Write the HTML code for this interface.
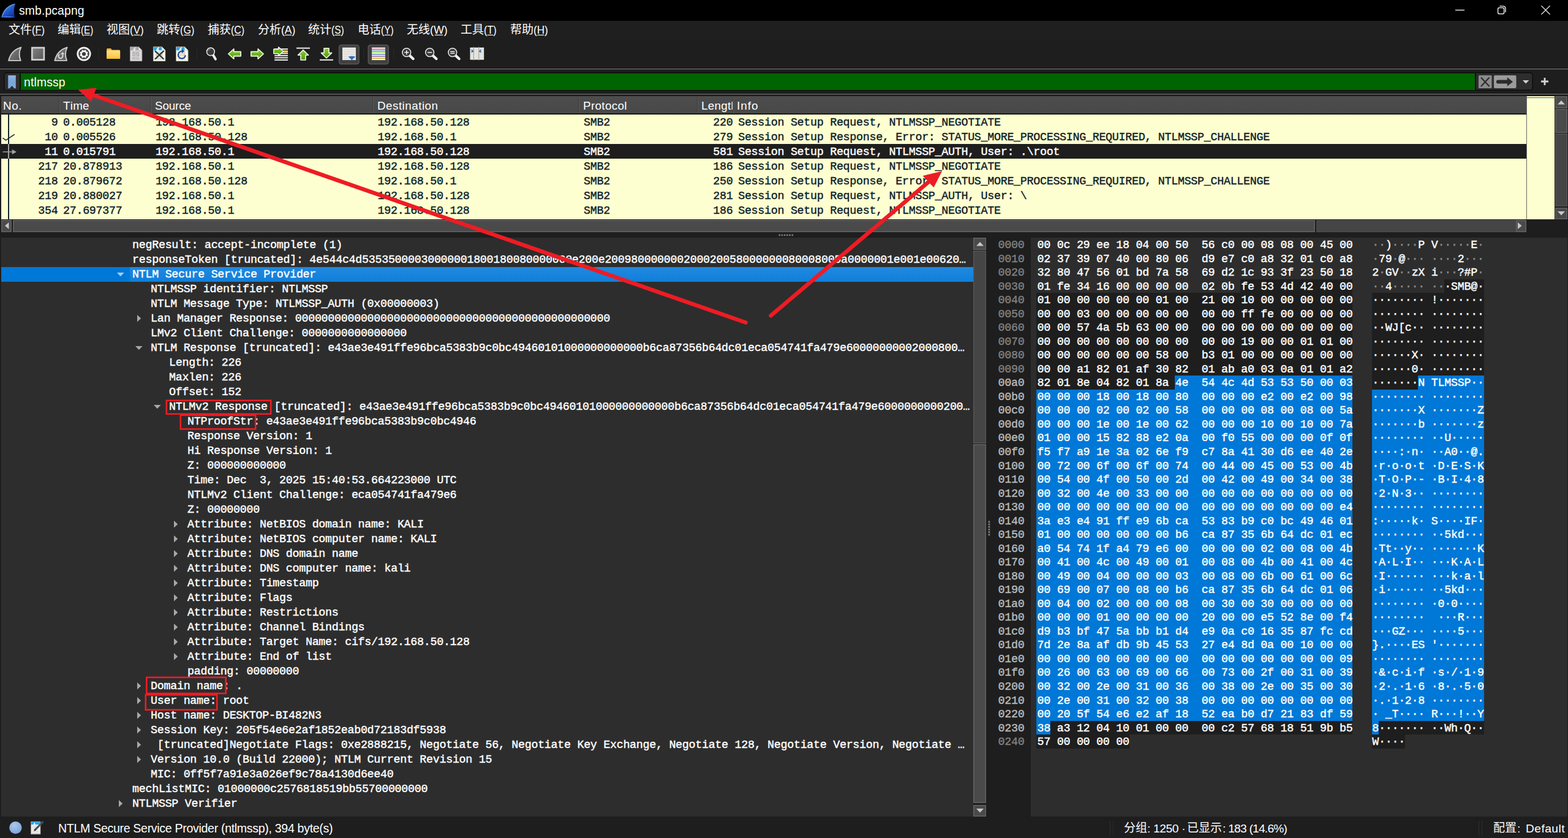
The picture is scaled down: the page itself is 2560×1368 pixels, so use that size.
<!DOCTYPE html>
<html><head><meta charset="utf-8"><title>smb.pcapng</title>
<style>
html,body{margin:0;padding:0;}
body{width:2560px;height:1368px;background:#1e1e1e;overflow:hidden;position:relative;
 font-family:"Liberation Sans",sans-serif;color:#fff;font-kerning:none;font-variant-ligatures:none;}
.a{position:absolute;}
.t{position:absolute;white-space:pre;line-height:1;}
.m{font-family:"Liberation Mono",monospace;font-size:18.33034987794955px;letter-spacing:-0.2860px;white-space:pre;-webkit-text-stroke:0.42px currentColor;}
.mh{font-family:"Liberation Mono",monospace;font-size:18.33034987794955px;letter-spacing:-0.2680px;white-space:pre;-webkit-text-stroke:0.42px currentColor;}
.u{font-family:"Liberation Sans",sans-serif;}
svg{position:absolute;overflow:visible;}
</style></head>
<body>
<div class="a" style="left:0px;top:0px;width:2560px;height:34px;background:#000;"></div>
<svg class="a" style="left:2px;top:4.5px" width="25" height="25" viewBox="0 0 25 25"><defs><linearGradient id="gsh" x1="0.1" y1="0" x2="0.9" y2="1"><stop offset="0" stop-color="#5aa0f0"/><stop offset="0.55" stop-color="#1f55c8"/><stop offset="1" stop-color="#0c2a92"/></linearGradient></defs><path d="M0.3 23.6C2.6 12.6 9.4 4 23.2 0.8C20.3 8.4 20.4 16 22.4 23.6Z" fill="url(#gsh)"/><path d="M1.2 22.6C3.6 12.8 9.8 5 21.6 1.8" stroke="#8cc0f8" stroke-width="1.1" fill="none" opacity="0.8"/><path d="M0.6 23.2C6 21.6 16 21.4 22.2 23.2Z" fill="#7fb2f2" opacity="0.75"/></svg>
<svg class="a" style="left:31px;top:24.0px" width="1" height="1"><text x="0" y="0" font-family="Liberation Sans" font-size="19.3" fill="#fff" textLength="106.50" lengthAdjust="spacing" style="white-space:pre;">smb.pcapng</text></svg>
<svg class="a" style="left:2360px;top:0" width="200" height="34" viewBox="0 0 200 34"><path d="M16 16.5h15" stroke="#fff" stroke-width="1.3" fill="none"/><rect x="85.6" y="12.6" width="10" height="10" rx="2.2" fill="none" stroke="#fff" stroke-width="1.3"/><path d="M88.3 10.2h6.2a3.5 3.5 0 0 1 3.5 3.5v6.2" fill="none" stroke="#fff" stroke-width="1.3"/><path d="M156.4 9.4l14.2 14.2M170.6 9.4l-14.2 14.2" stroke="#fff" stroke-width="1.3" fill="none"/></svg>
<div class="a" style="left:0px;top:34px;width:2560px;height:30px;background:#1f1f1f;"></div>
<svg class="a" style="left:14.2px;top:54.8px" width="1" height="1"><text x="0" y="0" font-family="'Liberation Sans','Noto Sans CJK SC',sans-serif" font-size="19" fill="#fff" textLength="38" lengthAdjust="spacing">文件</text></svg>
<svg class="a" style="left:52.20px;top:55.4px" width="1" height="1"><text x="0" y="0" font-family="Liberation Sans" font-size="19" fill="#fff" textLength="20.90" lengthAdjust="spacingAndGlyphs">(F)</text><rect x="5.64" y="1.6" width="9.61" height="1.2" fill="#fff"/></svg>
<svg class="a" style="left:94.2px;top:54.8px" width="1" height="1"><text x="0" y="0" font-family="'Liberation Sans','Noto Sans CJK SC',sans-serif" font-size="19" fill="#fff" textLength="38" lengthAdjust="spacing">编辑</text></svg>
<svg class="a" style="left:132.20px;top:55.4px" width="1" height="1"><text x="0" y="0" font-family="Liberation Sans" font-size="19" fill="#fff" textLength="20.20" lengthAdjust="spacingAndGlyphs">(E)</text><rect x="5.45" y="1.6" width="9.29" height="1.2" fill="#fff"/></svg>
<svg class="a" style="left:173.79999999999998px;top:54.8px" width="1" height="1"><text x="0" y="0" font-family="'Liberation Sans','Noto Sans CJK SC',sans-serif" font-size="19" fill="#fff" textLength="38" lengthAdjust="spacing">视图</text></svg>
<svg class="a" style="left:211.80px;top:55.4px" width="1" height="1"><text x="0" y="0" font-family="Liberation Sans" font-size="19" fill="#fff" textLength="22.60" lengthAdjust="spacingAndGlyphs">(V)</text><rect x="6.10" y="1.6" width="10.40" height="1.2" fill="#fff"/></svg>
<svg class="a" style="left:255.8px;top:54.8px" width="1" height="1"><text x="0" y="0" font-family="'Liberation Sans','Noto Sans CJK SC',sans-serif" font-size="19" fill="#fff" textLength="38" lengthAdjust="spacing">跳转</text></svg>
<svg class="a" style="left:293.80px;top:55.4px" width="1" height="1"><text x="0" y="0" font-family="Liberation Sans" font-size="19" fill="#fff" textLength="23.40" lengthAdjust="spacingAndGlyphs">(G)</text><rect x="6.32" y="1.6" width="10.76" height="1.2" fill="#fff"/></svg>
<svg class="a" style="left:339.0px;top:54.8px" width="1" height="1"><text x="0" y="0" font-family="'Liberation Sans','Noto Sans CJK SC',sans-serif" font-size="19" fill="#fff" textLength="38" lengthAdjust="spacing">捕获</text></svg>
<svg class="a" style="left:377.00px;top:55.4px" width="1" height="1"><text x="0" y="0" font-family="Liberation Sans" font-size="19" fill="#fff" textLength="22.20" lengthAdjust="spacingAndGlyphs">(C)</text><rect x="5.99" y="1.6" width="10.21" height="1.2" fill="#fff"/></svg>
<svg class="a" style="left:421.09999999999997px;top:54.8px" width="1" height="1"><text x="0" y="0" font-family="'Liberation Sans','Noto Sans CJK SC',sans-serif" font-size="19" fill="#fff" textLength="38" lengthAdjust="spacing">分析</text></svg>
<svg class="a" style="left:459.10px;top:55.4px" width="1" height="1"><text x="0" y="0" font-family="Liberation Sans" font-size="19" fill="#fff" textLength="23.30" lengthAdjust="spacingAndGlyphs">(A)</text><rect x="6.29" y="1.6" width="10.72" height="1.2" fill="#fff"/></svg>
<svg class="a" style="left:503.2px;top:54.8px" width="1" height="1"><text x="0" y="0" font-family="'Liberation Sans','Noto Sans CJK SC',sans-serif" font-size="19" fill="#fff" textLength="38" lengthAdjust="spacing">统计</text></svg>
<svg class="a" style="left:541.20px;top:55.4px" width="1" height="1"><text x="0" y="0" font-family="Liberation Sans" font-size="19" fill="#fff" textLength="20.80" lengthAdjust="spacingAndGlyphs">(S)</text><rect x="5.62" y="1.6" width="9.57" height="1.2" fill="#fff"/></svg>
<svg class="a" style="left:583.7px;top:54.8px" width="1" height="1"><text x="0" y="0" font-family="'Liberation Sans','Noto Sans CJK SC',sans-serif" font-size="19" fill="#fff" textLength="38" lengthAdjust="spacing">电话</text></svg>
<svg class="a" style="left:621.70px;top:55.4px" width="1" height="1"><text x="0" y="0" font-family="Liberation Sans" font-size="19" fill="#fff" textLength="20.80" lengthAdjust="spacingAndGlyphs">(Y)</text><rect x="5.62" y="1.6" width="9.57" height="1.2" fill="#fff"/></svg>
<svg class="a" style="left:664.4000000000001px;top:54.8px" width="1" height="1"><text x="0" y="0" font-family="'Liberation Sans','Noto Sans CJK SC',sans-serif" font-size="19" fill="#fff" textLength="38" lengthAdjust="spacing">无线</text></svg>
<svg class="a" style="left:702.40px;top:55.4px" width="1" height="1"><text x="0" y="0" font-family="Liberation Sans" font-size="19" fill="#fff" textLength="28.80" lengthAdjust="spacingAndGlyphs">(W)</text><rect x="7.78" y="1.6" width="13.25" height="1.2" fill="#fff"/></svg>
<svg class="a" style="left:752.4000000000001px;top:54.8px" width="1" height="1"><text x="0" y="0" font-family="'Liberation Sans','Noto Sans CJK SC',sans-serif" font-size="19" fill="#fff" textLength="38" lengthAdjust="spacing">工具</text></svg>
<svg class="a" style="left:790.40px;top:55.4px" width="1" height="1"><text x="0" y="0" font-family="Liberation Sans" font-size="19" fill="#fff" textLength="20.80" lengthAdjust="spacingAndGlyphs">(T)</text><rect x="5.62" y="1.6" width="9.57" height="1.2" fill="#fff"/></svg>
<svg class="a" style="left:832.7px;top:54.8px" width="1" height="1"><text x="0" y="0" font-family="'Liberation Sans','Noto Sans CJK SC',sans-serif" font-size="19" fill="#fff" textLength="38" lengthAdjust="spacing">帮助</text></svg>
<svg class="a" style="left:870.70px;top:55.4px" width="1" height="1"><text x="0" y="0" font-family="Liberation Sans" font-size="19" fill="#fff" textLength="23.70" lengthAdjust="spacingAndGlyphs">(H)</text><rect x="6.40" y="1.6" width="10.90" height="1.2" fill="#fff"/></svg>
<div class="a" style="left:0px;top:64px;width:2560px;height:47px;background:#1e1e1e;"></div>
<svg class="a" style="left:0;top:64px" width="900" height="48" viewBox="0 64 900 48"><defs>
<linearGradient id="gfin" x1="0" y1="0" x2="1" y2="1"><stop offset="0" stop-color="#838383"/><stop offset="1" stop-color="#565656"/></linearGradient>
<linearGradient id="ggrn" x1="0" y1="0" x2="0" y2="1"><stop offset="0" stop-color="#8fd134"/><stop offset="1" stop-color="#4f9a0a"/></linearGradient>
<linearGradient id="gfold" x1="0" y1="0" x2="0" y2="1"><stop offset="0" stop-color="#ffe08a"/><stop offset="1" stop-color="#fbc437"/></linearGradient>
<linearGradient id="gblue" x1="0" y1="0" x2="0" y2="1"><stop offset="0" stop-color="#5fb0ee"/><stop offset="1" stop-color="#e9f1f6"/></linearGradient>
</defs><g transform="translate(12.5,76)"><path d="M1.6 22.9C3.8 13.2 9.6 5 21.8 1.3C18.4 8.2 18.4 15.6 21.2 22.9Z" fill="url(#gfin)" stroke="#cfcfcf" stroke-width="1.9" stroke-linejoin="round"/></g><g transform="translate(51,76.6)"><rect x="1.3" y="1.3" width="19.6" height="19.6" fill="url(#gfin)" stroke="#d0d0d0" stroke-width="2.7"/></g><g transform="translate(87.8,76)"><path d="M1.6 22.9C3.8 13.2 9.6 5 21.8 1.3C18.4 8.2 18.4 15.6 21.2 22.9Z" fill="url(#gfin)" stroke="#cfcfcf" stroke-width="1.9" stroke-linejoin="round"/><path d="M14.6 11.4v4.3a3.5 3.5 0 1 1-5.6-2.8" fill="none" stroke="#d4d4d4" stroke-width="2.1"/><path d="M10.4 12.4l4.3-3.4 2.9 3.4z" fill="#d4d4d4"/></g><circle cx="137" cy="88" r="10.2" fill="#3c3c3c" stroke="#f4f4f4" stroke-width="2.8"/><path d="M141.25 89.76L143.37 90.64M138.76 92.25L139.64 94.37M135.24 92.25L134.36 94.37M132.75 89.76L130.63 90.64M132.75 86.24L130.63 85.36M135.24 83.75L134.36 81.63M138.76 83.75L139.64 81.63M141.25 86.24L143.37 85.36" stroke="#f4f4f4" stroke-width="2.5" fill="none"/><circle cx="137" cy="88" r="4.4" fill="#3c3c3c" stroke="#f4f4f4" stroke-width="2.6"/><path d="M161 80v16" stroke="#282828" stroke-width="1.2"/><g transform="translate(173.6,78.4)"><path d="M0.5 2.2a1.5 1.5 0 0 1 1.5-1.5h5.2l2.2 2.3h11.6a1.5 1.5 0 0 1 1.5 1.5v11.8a1.2 1.2 0 0 1-1.2 1.2h-19.6a1.2 1.2 0 0 1-1.2-1.2z" fill="#f5b62c"/><path d="M0.5 5.2a1.3 1.3 0 0 1 1.3-1.3h19.4a1.3 1.3 0 0 1 1.3 1.3v11.1a1.2 1.2 0 0 1-1.2 1.2h-19.6a1.2 1.2 0 0 1-1.2-1.2z" fill="url(#gfold)"/></g><g transform="translate(212,76)"><path d="M0.4 0.4h13.8l5.6 5.6v17.6h-19.4z" fill="#dadada" stroke="#9a9a9a" stroke-width="0.8"/><path d="M0.9 0.9h13.1l5.3 5.3h-18.4z" fill="#a9a9a9"/><path d="M9.4 0.9c-2.6 0.6-4 2.6-4.2 5.6h4.6c-1.4-2-1.4-4 0.6-5.6z" fill="#e3e3e3"/><path d="M14.2 0.6v5.4h5.4z" fill="#efefef" stroke="#9a9a9a" stroke-width="0.5"/><path d="M19.4 7v16.2h-18.6" stroke="#bdbdbd" stroke-width="1" fill="none"/><text x="3.9" y="11.9" font-family="Liberation Mono" font-size="4.7" font-weight="bold" fill="#9d9d9d" textLength="11.6" lengthAdjust="spacingAndGlyphs">0101</text><text x="3.9" y="16.4" font-family="Liberation Mono" font-size="4.7" font-weight="bold" fill="#9d9d9d" textLength="11.6" lengthAdjust="spacingAndGlyphs">0110</text><text x="3.9" y="20.9" font-family="Liberation Mono" font-size="4.7" font-weight="bold" fill="#9d9d9d" textLength="11.6" lengthAdjust="spacingAndGlyphs">0111</text></g><g transform="translate(250,76)"><path d="M0.4 0.4h13.8l5.6 5.6v17.6h-19.4z" fill="#fbfbef" stroke="#b9b9a6" stroke-width="0.8"/><path d="M0.9 0.9h13.1l5.3 5.3h-18.4z" fill="#2ba4ea"/><path d="M9.4 0.9c-2.6 0.6-4 2.6-4.2 5.6h4.6c-1.4-2-1.4-4 0.6-5.6z" fill="#fdfdfd"/><path d="M14.2 0.6v5.4h5.4z" fill="#ffffff" stroke="#b9b9a6" stroke-width="0.5"/><path d="M19.4 7v16.2h-18.6" stroke="#d9d9c4" stroke-width="1" fill="none"/><text x="3.9" y="11.9" font-family="Liberation Mono" font-size="4.7" font-weight="bold" fill="#b3b3a6" textLength="11.6" lengthAdjust="spacingAndGlyphs">0101</text><text x="3.9" y="16.4" font-family="Liberation Mono" font-size="4.7" font-weight="bold" fill="#b3b3a6" textLength="11.6" lengthAdjust="spacingAndGlyphs">0110</text><text x="3.9" y="20.9" font-family="Liberation Mono" font-size="4.7" font-weight="bold" fill="#b3b3a6" textLength="11.6" lengthAdjust="spacingAndGlyphs">0111</text><path d="M3.6 7.6L16.8 20M16.8 7.6L3.6 20" stroke="#2e3436" stroke-width="2.3" fill="none" stroke-linecap="round"/></g><g transform="translate(287.2,76)"><path d="M0.4 0.4h13.8l5.6 5.6v17.6h-19.4z" fill="#fbfbef" stroke="#b9b9a6" stroke-width="0.8"/><path d="M0.9 0.9h13.1l5.3 5.3h-18.4z" fill="#2ba4ea"/><path d="M9.4 0.9c-2.6 0.6-4 2.6-4.2 5.6h4.6c-1.4-2-1.4-4 0.6-5.6z" fill="#fdfdfd"/><path d="M14.2 0.6v5.4h5.4z" fill="#ffffff" stroke="#b9b9a6" stroke-width="0.5"/><path d="M19.4 7v16.2h-18.6" stroke="#d9d9c4" stroke-width="1" fill="none"/><text x="3.9" y="11.9" font-family="Liberation Mono" font-size="4.7" font-weight="bold" fill="#b3b3a6" textLength="11.6" lengthAdjust="spacingAndGlyphs">0101</text><text x="3.9" y="16.4" font-family="Liberation Mono" font-size="4.7" font-weight="bold" fill="#b3b3a6" textLength="11.6" lengthAdjust="spacingAndGlyphs">0110</text><text x="3.9" y="20.9" font-family="Liberation Mono" font-size="4.7" font-weight="bold" fill="#b3b3a6" textLength="11.6" lengthAdjust="spacingAndGlyphs">0111</text><path d="M15.6 14.2a6 6 0 1 1-5.4-6.6" stroke="#1b468f" stroke-width="2.1" fill="none"/><path d="M9.6 4.6l4.4 3-4.4 3.2z" fill="#1b468f"/></g><path d="M321.5 80v16" stroke="#282828" stroke-width="1.2"/><g transform="translate(336.5,77)"><path d="M11 12L15.4 19.6" stroke="#f0f0f0" stroke-width="4" stroke-linecap="round" fill="none"/><circle cx="7.4" cy="7.4" r="6.4" fill="#3b3b3b" stroke="#ededed" stroke-width="1.5"/><path d="M3.2 6.2a4.6 4.6 0 0 1 4.2-3" stroke="#9a9a9a" stroke-width="1" fill="none"/></g><path transform="translate(372,79)" d="M0.8 9L9.8 0.8V5.4H21.2V12.6H9.8V17.2Z" fill="url(#ggrn)" stroke="#f3f9ea" stroke-width="1.6" stroke-linejoin="round"/><path transform="translate(431,79) scale(-1,1)" d="M0.8 9L9.8 0.8V5.4H21.2V12.6H9.8V17.2Z" fill="url(#ggrn)" stroke="#f3f9ea" stroke-width="1.6" stroke-linejoin="round"/><g transform="translate(446,76)"><rect x="2.2" y="3.20" width="21.8" height="1.9" fill="#f6f6f6"/><rect x="2.2" y="6.75" width="21.8" height="1.9" fill="#f6f6f6"/><rect x="2.2" y="10.30" width="21.8" height="1.9" fill="#f6f6f6"/><rect x="2.2" y="13.85" width="21.8" height="1.9" fill="#f6f6f6"/><rect x="2.2" y="17.40" width="21.8" height="1.9" fill="#f6f6f6"/><rect x="2.2" y="20.95" width="21.8" height="1.9" fill="#f6f6f6"/><rect x="17" y="6.4" width="7" height="3.2" fill="#f7dc3c"/><path d="M0.9 4.2H8.6V0.9L16.8 7.9L8.6 14.9V11.6H0.9Z" fill="url(#ggrn)" stroke="#f3f9ea" stroke-width="1.5" stroke-linejoin="round"/></g><g transform="translate(484,77.4)"><path d="M0 1.2h22" stroke="#ededed" stroke-width="2" fill="none"/><path d="M11 4.2L19.6 12.6H15V20.6H7V12.6H2.4Z" fill="url(#ggrn)" stroke="#f3f9ea" stroke-width="1.6" stroke-linejoin="round"/></g><g transform="translate(522,78)"><path d="M0 19.8h22" stroke="#ededed" stroke-width="2" fill="none"/><path d="M11 16.8L19.6 8.4H15V0.8H7V8.4H2.4Z" fill="url(#ggrn)" stroke="#f3f9ea" stroke-width="1.6" stroke-linejoin="round"/></g><rect x="553.6" y="73.6" width="32.4" height="31" rx="3.5" fill="#404040" stroke="#585858" stroke-width="1.5"/><g transform="translate(559,77.6)"><rect x="0" y="0" width="22" height="20.5" fill="#c9c9c9"/><rect x="0" y="0.30" width="22" height="2.1" fill="#f0efe9"/><rect x="0" y="3.25" width="22" height="2.1" fill="#f0efe9"/><rect x="0" y="6.20" width="22" height="2.1" fill="#f0efe9"/><rect x="0" y="9.15" width="22" height="2.1" fill="#f0efe9"/><rect x="0" y="12.10" width="22" height="2.1" fill="#f0efe9"/><rect x="0" y="15.05" width="22" height="2.1" fill="#f0efe9"/><rect x="0" y="18.00" width="22" height="2.1" fill="#f0efe9"/><path d="M10.2 15h10.4l-5.2 5.6z" fill="#2f6fc4"/><ellipse cx="15.4" cy="15.4" rx="5.2" ry="1.6" fill="#2f6fc4"/></g><path d="M594 80v16" stroke="#282828" stroke-width="1.2"/><rect x="601.2" y="73.6" width="33" height="31" rx="3.5" fill="#404040" stroke="#585858" stroke-width="1.5"/><g transform="translate(607,77.6)"><rect x="0" y="0" width="22" height="20.5" fill="#fcfcfc"/><rect x="0" y="2.20" width="22" height="1.15" fill="#e01b24"/><rect x="0" y="5.20" width="22" height="1.15" fill="#3465a4"/><rect x="0" y="8.20" width="22" height="1.15" fill="#73d216"/><rect x="0" y="11.20" width="22" height="1.15" fill="#3465a4"/><rect x="0" y="14.20" width="22" height="1.15" fill="#75507b"/><rect x="0" y="17.20" width="22" height="1.15" fill="#c4a000"/></g><path d="M642.5 80v16" stroke="#282828" stroke-width="1.2"/><g transform="translate(656,77.8)"><path d="M12.8 12.8L18.6 18.2" stroke="#f0f0f0" stroke-width="4.3" stroke-linecap="round" fill="none"/><circle cx="7.8" cy="7.8" r="6.9" fill="#3b3b3b" stroke="#ededed" stroke-width="1.5"/><path d="M4.2 7.8h7.2M7.8 4.2v7.2" stroke="#f2f2f2" stroke-width="1.5" fill="none"/></g><g transform="translate(693.8,77.8)"><path d="M12.8 12.8L18.6 18.2" stroke="#f0f0f0" stroke-width="4.3" stroke-linecap="round" fill="none"/><circle cx="7.8" cy="7.8" r="6.9" fill="#3b3b3b" stroke="#ededed" stroke-width="1.5"/><path d="M4.2 7.8h7.2" stroke="#f2f2f2" stroke-width="1.5" fill="none"/></g><g transform="translate(731,77.8)"><path d="M12.8 12.8L18.6 18.2" stroke="#f0f0f0" stroke-width="4.3" stroke-linecap="round" fill="none"/><circle cx="7.8" cy="7.8" r="6.9" fill="#3b3b3b" stroke="#ededed" stroke-width="1.5"/><path d="M4.2 6.4h7.2M4.2 9.3h7.2" stroke="#f2f2f2" stroke-width="1.5" fill="none"/></g><g transform="translate(767.6,77)"><rect x="0" y="0.6" width="22.5" height="20" fill="#c5c5bd"/><rect x="0" y="0.90" width="22.5" height="2.0" fill="#f1f0ea"/><rect x="0" y="3.75" width="22.5" height="2.0" fill="#f1f0ea"/><rect x="0" y="6.60" width="22.5" height="2.0" fill="#f1f0ea"/><rect x="0" y="9.45" width="22.5" height="2.0" fill="#f1f0ea"/><rect x="0" y="12.30" width="22.5" height="2.0" fill="#f1f0ea"/><rect x="0" y="15.15" width="22.5" height="2.0" fill="#f1f0ea"/><rect x="0" y="18.00" width="22.5" height="2.0" fill="#f1f0ea"/><path d="M5.8 -0.6v22.2M14.2 -0.6v22.2" stroke="#9a9a9a" stroke-width="1" fill="none"/><path d="M2.2 3.4l4 3-4 3z" fill="#3a6fb8"/><path d="M17.8 3.4l-4 3 4 3z" fill="#3a6fb8"/></g></svg>
<div class="a" style="left:0px;top:111px;width:2560px;height:1px;background:#141414;"></div>
<div class="a" style="left:0px;top:112px;width:2560px;height:1px;background:#7a7a7a;"></div>
<div class="a" style="left:0px;top:113px;width:2560px;height:1px;background:#2a2a2a;"></div>
<div class="a" style="left:6px;top:118px;width:2497px;height:30px;background:#2d2d2d;border-radius:5px;box-shadow:0 0 0 1.5px #0c0c0c inset;"></div>
<div class="a" style="left:8px;top:120px;width:24px;height:27px;background:#2d2d2d;border-radius:3px 0 0 3px;"></div>
<div class="a" style="left:32px;top:120px;width:2px;height:27px;background:#101010;"></div>
<div class="a" style="left:34px;top:120px;width:2374px;height:27px;background:#006400;"></div>
<div class="a" style="left:2408px;top:120px;width:2px;height:27px;background:#101010;"></div>
<svg class="a" style="left:13px;top:123px" width="14" height="22" viewBox="0 0 14 22"><defs><linearGradient id="gbm" x1="0" y1="0" x2="0" y2="1"><stop offset="0" stop-color="#8fb6e4"/><stop offset="0.5" stop-color="#7aa5d6"/><stop offset="1" stop-color="#7eaadc"/></linearGradient></defs><path d="M0.2 0h12.6v21.2h-2.4l-3.9-4.2-3.9 4.2h-2.4z" fill="url(#gbm)"/></svg>
<svg class="a" style="left:39px;top:140.6px" width="1" height="1"><text x="0" y="0" font-family="Liberation Sans" font-size="19.3" fill="#fff" textLength="67.50" lengthAdjust="spacing" style="white-space:pre;">ntlmssp</text></svg>
<svg class="a" style="left:2414px;top:123px" width="22" height="21" viewBox="0 0 22 21"><rect x="0" y="0" width="21.5" height="21" rx="1.5" fill="#8c8c8c"/><path d="M4 3.5L17.5 18M17.5 3.5L4 18" stroke="#2b2b2b" stroke-width="2.1" fill="none"/></svg>
<svg class="a" style="left:2439px;top:123px" width="37" height="21" viewBox="0 0 37 21"><rect x="0" y="0" width="36.5" height="21" rx="2" fill="#9b9b9b"/><path d="M6.8 7.6h15v-4.4l9.2 7.3-9.2 7.3v-4.4h-15a2.9 2.9 0 0 1 0-5.8z" fill="#2b2b2b"/></svg>
<svg class="a" style="left:2486px;top:130.5px" width="11" height="6" viewBox="0 0 11 6"><path d="M0 0h10.4l-5.2 5.6z" fill="#d0d0d0"/></svg>
<svg class="a" style="left:2516px;top:127px" width="12" height="12" viewBox="0 0 12 12"><path d="M4.6 0h2.8v4.6h4.6v2.8h-4.6v4.6h-2.8v-4.6h-4.6v-2.8h4.6z" fill="#d4d4d4"/></svg>
<div class="a" style="left:0px;top:152px;width:2560px;height:1px;background:#141414;"></div>
<div class="a" style="left:0px;top:153px;width:2560px;height:1px;background:#7a7a7a;"></div>
<div class="a" style="left:0px;top:154px;width:2560px;height:1px;background:#2a2a2a;"></div>
<div class="a" style="left:2px;top:157px;width:2490px;height:29px;background:#4a4a4a;background:linear-gradient(#4d4d4d,#484848);"></div>
<div class="a" style="left:2px;top:185px;width:2490px;height:1.5px;background:#1a1a1a;"></div>
<svg class="a" style="left:5px;top:178.5px" width="1" height="1"><text x="0" y="0" font-family="Liberation Sans" font-size="18.8" fill="#fff" textLength="30.50" lengthAdjust="spacing" style="white-space:pre;">No.</text></svg>
<div class="a" style="left:96px;top:158px;width:1px;height:27px;background:#3a3a3a;"></div>
<div class="a" style="left:97px;top:158px;width:1px;height:27px;background:#5c5c5c;"></div>
<svg class="a" style="left:102.5px;top:178.5px" width="1" height="1"><text x="0" y="0" font-family="Liberation Sans" font-size="18.8" fill="#fff" textLength="42.50" lengthAdjust="spacing" style="white-space:pre;">Time</text></svg>
<div class="a" style="left:245px;top:158px;width:1px;height:27px;background:#3a3a3a;"></div>
<div class="a" style="left:246px;top:158px;width:1px;height:27px;background:#5c5c5c;"></div>
<svg class="a" style="left:252.5px;top:178.5px" width="1" height="1"><text x="0" y="0" font-family="Liberation Sans" font-size="18.8" fill="#fff" textLength="59.00" lengthAdjust="spacing" style="white-space:pre;">Source</text></svg>
<div class="a" style="left:608px;top:158px;width:1px;height:27px;background:#3a3a3a;"></div>
<div class="a" style="left:609px;top:158px;width:1px;height:27px;background:#5c5c5c;"></div>
<svg class="a" style="left:615.5px;top:178.5px" width="1" height="1"><text x="0" y="0" font-family="Liberation Sans" font-size="18.8" fill="#fff" textLength="99.00" lengthAdjust="spacing" style="white-space:pre;">Destination</text></svg>
<div class="a" style="left:944px;top:158px;width:1px;height:27px;background:#3a3a3a;"></div>
<div class="a" style="left:945px;top:158px;width:1px;height:27px;background:#5c5c5c;"></div>
<svg class="a" style="left:951.5px;top:178.5px" width="1" height="1"><text x="0" y="0" font-family="Liberation Sans" font-size="18.8" fill="#fff" textLength="71.50" lengthAdjust="spacing" style="white-space:pre;">Protocol</text></svg>
<div class="a" style="left:1138px;top:158px;width:1px;height:27px;background:#3a3a3a;"></div>
<div class="a" style="left:1139px;top:158px;width:1px;height:27px;background:#5c5c5c;"></div>
<div class="a" style="left:1145px;top:158px;width:51px;height:27px;overflow:hidden"><svg class="a" style="left:0;top:20.5px" width="1" height="1"><text x="0" y="0" font-family="Liberation Sans" font-size="18.8" fill="#fff" textLength="59" lengthAdjust="spacing">Length</text></svg></div>
<div class="a" style="left:1196px;top:158px;width:1px;height:27px;background:#3a3a3a;"></div>
<div class="a" style="left:1197px;top:158px;width:1px;height:27px;background:#5c5c5c;"></div>
<svg class="a" style="left:1203px;top:178.5px" width="1" height="1"><text x="0" y="0" font-family="Liberation Sans" font-size="18.8" fill="#fff" textLength="34.50" lengthAdjust="spacing" style="white-space:pre;">Info</text></svg>
<div class="a" style="left:2px;top:186.5px;width:2490px;height:171.5px;background:#feffd0;"></div>
<div class="t m" style="left:83.79px;top:191.76px;color:#0f2229">9</div>
<div class="t m" style="left:103.00px;top:191.76px;color:#0f2229">0.005128</div>
<div class="t m" style="left:253.90px;top:191.76px;color:#0f2229">192.168.50.1</div>
<div class="t m" style="left:616.60px;top:191.76px;color:#0f2229">192.168.50.128</div>
<div class="t m" style="left:953.10px;top:191.76px;color:#0f2229">SMB2</div>
<div class="t m" style="left:1164.26px;top:191.76px;color:#0f2229">220</div>
<div class="t m" style="left:1205.20px;top:191.76px;color:#0f2229">Session Setup Request, NTLMSSP_NEGOTIATE</div>
<div class="t m" style="left:73.07px;top:215.76px;color:#0f2229">10</div>
<div class="t m" style="left:103.00px;top:215.76px;color:#0f2229">0.005526</div>
<div class="t m" style="left:253.90px;top:215.76px;color:#0f2229">192.168.50.128</div>
<div class="t m" style="left:616.60px;top:215.76px;color:#0f2229">192.168.50.1</div>
<div class="t m" style="left:953.10px;top:215.76px;color:#0f2229">SMB2</div>
<div class="t m" style="left:1164.26px;top:215.76px;color:#0f2229">279</div>
<div class="t m" style="left:1205.20px;top:215.76px;color:#0f2229">Session Setup Response, Error: STATUS_MORE_PROCESSING_REQUIRED, NTLMSSP_CHALLENGE</div>
<div class="a" style="left:2px;top:234.5px;width:2490px;height:24px;background:#1e1e1e;"></div>
<div class="t m" style="left:73.07px;top:239.76px;color:#fff">11</div>
<div class="t m" style="left:103.00px;top:239.76px;color:#fff">0.015791</div>
<div class="t m" style="left:253.90px;top:239.76px;color:#fff">192.168.50.1</div>
<div class="t m" style="left:616.60px;top:239.76px;color:#fff">192.168.50.128</div>
<div class="t m" style="left:953.10px;top:239.76px;color:#fff">SMB2</div>
<div class="t m" style="left:1164.26px;top:239.76px;color:#fff">581</div>
<div class="t m" style="left:1205.20px;top:239.76px;color:#fff">Session Setup Request, NTLMSSP_AUTH, User: .\root</div>
<div class="t m" style="left:62.36px;top:263.76px;color:#0f2229">217</div>
<div class="t m" style="left:103.00px;top:263.76px;color:#0f2229">20.878913</div>
<div class="t m" style="left:253.90px;top:263.76px;color:#0f2229">192.168.50.1</div>
<div class="t m" style="left:616.60px;top:263.76px;color:#0f2229">192.168.50.128</div>
<div class="t m" style="left:953.10px;top:263.76px;color:#0f2229">SMB2</div>
<div class="t m" style="left:1164.26px;top:263.76px;color:#0f2229">186</div>
<div class="t m" style="left:1205.20px;top:263.76px;color:#0f2229">Session Setup Request, NTLMSSP_NEGOTIATE</div>
<div class="t m" style="left:62.36px;top:287.76px;color:#0f2229">218</div>
<div class="t m" style="left:103.00px;top:287.76px;color:#0f2229">20.879672</div>
<div class="t m" style="left:253.90px;top:287.76px;color:#0f2229">192.168.50.128</div>
<div class="t m" style="left:616.60px;top:287.76px;color:#0f2229">192.168.50.1</div>
<div class="t m" style="left:953.10px;top:287.76px;color:#0f2229">SMB2</div>
<div class="t m" style="left:1164.26px;top:287.76px;color:#0f2229">250</div>
<div class="t m" style="left:1205.20px;top:287.76px;color:#0f2229">Session Setup Response, Error: STATUS_MORE_PROCESSING_REQUIRED, NTLMSSP_CHALLENGE</div>
<div class="t m" style="left:62.36px;top:311.76px;color:#0f2229">219</div>
<div class="t m" style="left:103.00px;top:311.76px;color:#0f2229">20.880027</div>
<div class="t m" style="left:253.90px;top:311.76px;color:#0f2229">192.168.50.1</div>
<div class="t m" style="left:616.60px;top:311.76px;color:#0f2229">192.168.50.128</div>
<div class="t m" style="left:953.10px;top:311.76px;color:#0f2229">SMB2</div>
<div class="t m" style="left:1164.26px;top:311.76px;color:#0f2229">281</div>
<div class="t m" style="left:1205.20px;top:311.76px;color:#0f2229">Session Setup Request, NTLMSSP_AUTH, User: \</div>
<div class="t m" style="left:62.36px;top:335.76px;color:#0f2229">354</div>
<div class="t m" style="left:103.00px;top:335.76px;color:#0f2229">27.697377</div>
<div class="t m" style="left:253.90px;top:335.76px;color:#0f2229">192.168.50.1</div>
<div class="t m" style="left:616.60px;top:335.76px;color:#0f2229">192.168.50.128</div>
<div class="t m" style="left:953.10px;top:335.76px;color:#0f2229">SMB2</div>
<div class="t m" style="left:1164.26px;top:335.76px;color:#0f2229">186</div>
<div class="t m" style="left:1205.20px;top:335.76px;color:#0f2229">Session Setup Request, NTLMSSP_NEGOTIATE</div>
<div class="a" style="left:13.2px;top:186.5px;width:1.7px;height:48px;background:#12272e;"></div>
<div class="a" style="left:13.2px;top:258.5px;width:1.7px;height:99.5px;background:#12272e;"></div>
<div class="a" style="left:13.2px;top:234.5px;width:1.7px;height:24px;background:#a0a0a0;"></div>
<svg class="a" style="left:2px;top:210.5px" width="30" height="48" viewBox="0 0 30 48"><path d="M2.4 14.4L7.6 17.9L21.7 8.3" stroke="#12272e" stroke-width="1.5" fill="none"/><path d="M2.5 36.9h16" stroke="#a0a0a0" stroke-width="1.5" fill="none"/><path d="M17.6 32.8l7.4 4.1-7.4 4.1z" fill="#a0a0a0"/></svg>
<div class="a" style="left:2492px;top:157px;width:1px;height:201px;background:#6a6a6a;"></div>
<div class="a" style="left:2493px;top:157px;width:45px;height:201px;background:#feffd0;"></div>
<div class="a" style="left:2493px;top:159px;width:45px;height:1.4px;background:#0078d7;"></div>
<div class="a" style="left:2538.5px;top:157px;width:20.5px;height:201px;background:#1c1c1c;"></div>
<div class="a" style="left:2538.5px;top:157px;width:20.5px;height:19.5px;background:#4a4a4a;box-shadow:0 0 0 1.5px #626262 inset;"></div>
<div class="a" style="left:2538.5px;top:177.5px;width:20.5px;height:39px;background:#4a4a4a;box-shadow:0 0 0 1.5px #626262 inset;"></div>
<div class="a" style="left:2538.5px;top:218.0px;width:20.5px;height:119.0px;background:#454545;box-shadow:0 0 0 1.5px #545454 inset;"></div>
<div class="a" style="left:2538.5px;top:338.5px;width:20.5px;height:19.5px;background:#4a4a4a;box-shadow:0 0 0 1.5px #626262 inset;"></div>
<svg class="a" style="left:2542.75px;top:163.5px" width="12" height="7" viewBox="0 0 12 7"><path d="M0 6.5l6-6.5 6 6.5z" fill="#c8c8c8"/></svg>
<svg class="a" style="left:2542.75px;top:345.0px" width="12" height="7" viewBox="0 0 12 7"><path d="M0 0h12l-6 6.5z" fill="#c8c8c8"/></svg>
<div class="a" style="left:2px;top:359px;width:2490px;height:19.8px;background:#454545;box-shadow:0 1px 0 #505050 inset,0 -1px 0 #505050 inset;"></div>
<div class="a" style="left:2px;top:359px;width:17px;height:19.8px;background:#4a4a4a;box-shadow:0 0 0 1.5px #626262 inset;"></div>
<div class="a" style="left:2475px;top:359px;width:17px;height:19.8px;background:#4a4a4a;box-shadow:0 0 0 1.5px #626262 inset;"></div>
<svg class="a" style="left:7.5px;top:363.4px" width="7" height="11" viewBox="0 0 7 11"><path d="M6.5 0v11l-6.5-5.5z" fill="#c8c8c8"/></svg>
<svg class="a" style="left:2477.8px;top:363.4px" width="7" height="11" viewBox="0 0 7 11"><path d="M0 0l6.5 5.5-6.5 5.5z" fill="#c8c8c8"/></svg>
<div class="a" style="left:19px;top:359px;width:2130px;height:19.8px;background:#1c1c1c;"></div>
<div class="a" style="left:21px;top:359px;width:2126px;height:19.8px;background:#4a4a4a;box-shadow:0 0 0 1.5px #626262 inset;"></div>
<div class="a" style="left:2px;top:388px;width:1587px;height:945px;background:#2d2d2d;"></div>
<div class="t m" style="left:216.10px;top:392.16px;color:#fff">negResult: accept-incomplete (1)</div>
<div class="t m" style="left:216.10px;top:416.16px;color:#fff">responseToken [truncated]: 4e544c4d53535000030000001800180080000000e200e200980000000200020058000000080008005a0000001e001e00620…</div>
<div class="a" style="left:2px;top:436px;width:1587px;height:24px;background:#0078d7;"></div>
<div class="a" style="left:211.9px;top:436px;width:1377.1px;height:24px;background:#1a86de;background:linear-gradient(#2189df,#0f7fda);"></div>
<div class="t m" style="left:216.10px;top:440.16px;color:#fff">NTLM Secure Service Provider</div>
<svg class="a" style="left:190.9px;top:445.4px" width="12" height="7" viewBox="0 0 12 7"><path d="M0 0h11.6l-5.8 6.2z" fill="#a9cdf0"/></svg>
<div class="t m" style="left:246.10px;top:464.16px;color:#fff">NTLMSSP identifier: NTLMSSP</div>
<div class="t m" style="left:246.10px;top:488.16px;color:#fff">NTLM Message Type: NTLMSSP_AUTH (0x00000003)</div>
<div class="t m" style="left:246.10px;top:512.16px;color:#fff">Lan Manager Response: 000000000000000000000000000000000000000000000000</div>
<svg class="a" style="left:223.9px;top:514.4px" width="7" height="12" viewBox="0 0 7 12"><path d="M0 0l6.2 5.8-6.2 5.8z" fill="#a8a8a8"/></svg>
<div class="t m" style="left:246.10px;top:536.16px;color:#fff">LMv2 Client Challenge: 0000000000000000</div>
<div class="t m" style="left:246.10px;top:560.16px;color:#fff">NTLM Response [truncated]: e43ae3e491ffe96bca5383b9c0bc49460101000000000000b6ca87356b64dc01eca054741fa479e60000000002000800…</div>
<svg class="a" style="left:220.9px;top:565.4px" width="12" height="7" viewBox="0 0 12 7"><path d="M0 0h11.6l-5.8 6.2z" fill="#a8a8a8"/></svg>
<div class="t m" style="left:276.10px;top:584.16px;color:#fff">Length: 226</div>
<div class="t m" style="left:276.10px;top:608.16px;color:#fff">Maxlen: 226</div>
<div class="t m" style="left:276.10px;top:632.16px;color:#fff">Offset: 152</div>
<div class="t m" style="left:276.10px;top:656.16px;color:#fff">NTLMv2 Response [truncated]: e43ae3e491ffe96bca5383b9c0bc49460101000000000000b6ca87356b64dc01eca054741fa479e6000000000200…</div>
<svg class="a" style="left:250.9px;top:661.4px" width="12" height="7" viewBox="0 0 12 7"><path d="M0 0h11.6l-5.8 6.2z" fill="#a8a8a8"/></svg>
<div class="t m" style="left:306.10px;top:680.16px;color:#fff">NTProofStr: e43ae3e491ffe96bca5383b9c0bc4946</div>
<div class="t m" style="left:306.10px;top:704.16px;color:#fff">Response Version: 1</div>
<div class="t m" style="left:306.10px;top:728.16px;color:#fff">Hi Response Version: 1</div>
<div class="t m" style="left:306.10px;top:752.16px;color:#fff">Z: 000000000000</div>
<div class="t m" style="left:306.10px;top:776.16px;color:#fff">Time: Dec  3, 2025 15:40:53.664223000 UTC</div>
<div class="t m" style="left:306.10px;top:800.16px;color:#fff">NTLMv2 Client Challenge: eca054741fa479e6</div>
<div class="t m" style="left:306.10px;top:824.16px;color:#fff">Z: 00000000</div>
<div class="t m" style="left:306.10px;top:848.16px;color:#fff">Attribute: NetBIOS domain name: KALI</div>
<svg class="a" style="left:283.9px;top:850.4px" width="7" height="12" viewBox="0 0 7 12"><path d="M0 0l6.2 5.8-6.2 5.8z" fill="#a8a8a8"/></svg>
<div class="t m" style="left:306.10px;top:872.16px;color:#fff">Attribute: NetBIOS computer name: KALI</div>
<svg class="a" style="left:283.9px;top:874.4px" width="7" height="12" viewBox="0 0 7 12"><path d="M0 0l6.2 5.8-6.2 5.8z" fill="#a8a8a8"/></svg>
<div class="t m" style="left:306.10px;top:896.16px;color:#fff">Attribute: DNS domain name</div>
<svg class="a" style="left:283.9px;top:898.4px" width="7" height="12" viewBox="0 0 7 12"><path d="M0 0l6.2 5.8-6.2 5.8z" fill="#a8a8a8"/></svg>
<div class="t m" style="left:306.10px;top:920.16px;color:#fff">Attribute: DNS computer name: kali</div>
<svg class="a" style="left:283.9px;top:922.4px" width="7" height="12" viewBox="0 0 7 12"><path d="M0 0l6.2 5.8-6.2 5.8z" fill="#a8a8a8"/></svg>
<div class="t m" style="left:306.10px;top:944.16px;color:#fff">Attribute: Timestamp</div>
<svg class="a" style="left:283.9px;top:946.4px" width="7" height="12" viewBox="0 0 7 12"><path d="M0 0l6.2 5.8-6.2 5.8z" fill="#a8a8a8"/></svg>
<div class="t m" style="left:306.10px;top:968.16px;color:#fff">Attribute: Flags</div>
<svg class="a" style="left:283.9px;top:970.4px" width="7" height="12" viewBox="0 0 7 12"><path d="M0 0l6.2 5.8-6.2 5.8z" fill="#a8a8a8"/></svg>
<div class="t m" style="left:306.10px;top:992.16px;color:#fff">Attribute: Restrictions</div>
<svg class="a" style="left:283.9px;top:994.4px" width="7" height="12" viewBox="0 0 7 12"><path d="M0 0l6.2 5.8-6.2 5.8z" fill="#a8a8a8"/></svg>
<div class="t m" style="left:306.10px;top:1016.16px;color:#fff">Attribute: Channel Bindings</div>
<svg class="a" style="left:283.9px;top:1018.4px" width="7" height="12" viewBox="0 0 7 12"><path d="M0 0l6.2 5.8-6.2 5.8z" fill="#a8a8a8"/></svg>
<div class="t m" style="left:306.10px;top:1040.16px;color:#fff">Attribute: Target Name: cifs/192.168.50.128</div>
<svg class="a" style="left:283.9px;top:1042.4px" width="7" height="12" viewBox="0 0 7 12"><path d="M0 0l6.2 5.8-6.2 5.8z" fill="#a8a8a8"/></svg>
<div class="t m" style="left:306.10px;top:1064.16px;color:#fff">Attribute: End of list</div>
<svg class="a" style="left:283.9px;top:1066.4px" width="7" height="12" viewBox="0 0 7 12"><path d="M0 0l6.2 5.8-6.2 5.8z" fill="#a8a8a8"/></svg>
<div class="t m" style="left:306.10px;top:1088.16px;color:#fff">padding: 00000000</div>
<div class="t m" style="left:246.10px;top:1112.16px;color:#fff">Domain name: .</div>
<svg class="a" style="left:223.9px;top:1114.4px" width="7" height="12" viewBox="0 0 7 12"><path d="M0 0l6.2 5.8-6.2 5.8z" fill="#a8a8a8"/></svg>
<div class="t m" style="left:246.10px;top:1136.16px;color:#fff">User name: root</div>
<svg class="a" style="left:223.9px;top:1138.4px" width="7" height="12" viewBox="0 0 7 12"><path d="M0 0l6.2 5.8-6.2 5.8z" fill="#a8a8a8"/></svg>
<div class="t m" style="left:246.10px;top:1160.16px;color:#fff">Host name: DESKTOP-BI482N3</div>
<svg class="a" style="left:223.9px;top:1162.4px" width="7" height="12" viewBox="0 0 7 12"><path d="M0 0l6.2 5.8-6.2 5.8z" fill="#a8a8a8"/></svg>
<div class="t m" style="left:246.10px;top:1184.16px;color:#fff">Session Key: 205f54e6e2af1852eab0d72183df5938</div>
<svg class="a" style="left:223.9px;top:1186.4px" width="7" height="12" viewBox="0 0 7 12"><path d="M0 0l6.2 5.8-6.2 5.8z" fill="#a8a8a8"/></svg>
<div class="t m" style="left:246.10px;top:1208.16px;color:#fff"> [truncated]Negotiate Flags: 0xe2888215, Negotiate 56, Negotiate Key Exchange, Negotiate 128, Negotiate Version, Negotiate …</div>
<svg class="a" style="left:223.9px;top:1210.4px" width="7" height="12" viewBox="0 0 7 12"><path d="M0 0l6.2 5.8-6.2 5.8z" fill="#a8a8a8"/></svg>
<div class="t m" style="left:246.10px;top:1232.16px;color:#fff">Version 10.0 (Build 22000); NTLM Current Revision 15</div>
<svg class="a" style="left:223.9px;top:1234.4px" width="7" height="12" viewBox="0 0 7 12"><path d="M0 0l6.2 5.8-6.2 5.8z" fill="#a8a8a8"/></svg>
<div class="t m" style="left:246.10px;top:1256.16px;color:#fff">MIC: 0ff5f7a91e3a026ef9c78a4130d6ee40</div>
<div class="t m" style="left:216.10px;top:1280.16px;color:#fff">mechListMIC: 01000000c2576818519bb55700000000</div>
<div class="t m" style="left:216.10px;top:1304.16px;color:#fff">NTLMSSP Verifier</div>
<svg class="a" style="left:193.9px;top:1306.4px" width="7" height="12" viewBox="0 0 7 12"><path d="M0 0l6.2 5.8-6.2 5.8z" fill="#a8a8a8"/></svg>
<div class="a" style="left:1589px;top:388px;width:21.2px;height:945px;background:#1c1c1c;"></div>
<div class="a" style="left:1589px;top:388px;width:21.2px;height:19.5px;background:#4a4a4a;box-shadow:0 0 0 1.5px #626262 inset;"></div>
<div class="a" style="left:1589px;top:409.0px;width:21.2px;height:314.5px;background:#454545;box-shadow:0 0 0 1.5px #545454 inset;"></div>
<div class="a" style="left:1589px;top:725px;width:21.2px;height:585.5px;background:#4a4a4a;box-shadow:0 0 0 1.5px #626262 inset;"></div>
<div class="a" style="left:1589px;top:1313.5px;width:21.2px;height:19.5px;background:#4a4a4a;box-shadow:0 0 0 1.5px #626262 inset;"></div>
<svg class="a" style="left:1593.6px;top:394.5px" width="12" height="7" viewBox="0 0 12 7"><path d="M0 6.5l6-6.5 6 6.5z" fill="#c8c8c8"/></svg>
<svg class="a" style="left:1593.6px;top:1320.0px" width="12" height="7" viewBox="0 0 12 7"><path d="M0 0h12l-6 6.5z" fill="#c8c8c8"/></svg>
<div class="a" style="left:1617.5px;top:388px;width:941.5px;height:945px;background:#2d2d2d;"></div>
<div class="a" style="left:1617.5px;top:388px;width:65.5px;height:945px;background:#1e1e1e;"></div>
<div class="t mh" style="left:1629.61px;top:392.06px;color:#808080">0000</div>
<div class="t mh" style="left:1693.50px;top:392.06px;color:#fff">00 0c 29 ee 18 04 00 50  56 c0 00 08 08 00 45 00</div>
<div class="t mh" style="left:2240.23px;top:392.06px;color:#fff"><span style="color:#8a8a8a">··</span>)<span style="color:#8a8a8a">····</span>P V<span style="color:#8a8a8a">·····</span>E<span style="color:#8a8a8a">·</span></div>
<div class="t mh" style="left:1629.61px;top:414.59px;color:#808080">0010</div>
<div class="t mh" style="left:1693.50px;top:414.59px;color:#fff">02 37 39 07 40 00 80 06  d9 e7 c0 a8 32 01 c0 a8</div>
<div class="t mh" style="left:2240.23px;top:414.59px;color:#fff"><span style="color:#8a8a8a">·</span>79<span style="color:#8a8a8a">·</span>@<span style="color:#8a8a8a">···</span> <span style="color:#8a8a8a">····</span>2<span style="color:#8a8a8a">···</span></div>
<div class="t mh" style="left:1629.61px;top:437.12px;color:#808080">0020</div>
<div class="t mh" style="left:1693.50px;top:437.12px;color:#fff">32 80 47 56 01 bd 7a 58  69 d2 1c 93 3f 23 50 18</div>
<div class="t mh" style="left:2240.23px;top:437.12px;color:#fff">2<span style="color:#8a8a8a">·</span>GV<span style="color:#8a8a8a">··</span>zX i<span style="color:#8a8a8a">···</span>?#P<span style="color:#8a8a8a">·</span></div>
<div class="a" style="left:2025.15px;top:455.59px;width:183.35px;height:22.55px;background:#1e1e1e;"></div>
<div class="a" style="left:2358.2px;top:455.59px;width:65.0px;height:22.55px;background:#1e1e1e;"></div>
<div class="t mh" style="left:1629.61px;top:459.65px;color:#808080">0030</div>
<div class="t mh" style="left:1693.50px;top:459.65px;color:#fff">01 fe 34 16 00 00 00 00  02 0b fe 53 4d 42 40 00</div>
<div class="t mh" style="left:2240.23px;top:459.65px;color:#fff"><span style="color:#8a8a8a">··</span>4<span style="color:#8a8a8a">·····</span> <span style="color:#8a8a8a">··</span>·SMB@·</div>
<div class="a" style="left:1691.9px;top:478.12px;width:516.6px;height:22.55px;background:#1e1e1e;"></div>
<div class="a" style="left:2239.95px;top:478.12px;width:183.25px;height:22.55px;background:#1e1e1e;"></div>
<div class="t mh" style="left:1629.61px;top:482.18px;color:#808080">0040</div>
<div class="t mh" style="left:1693.50px;top:482.18px;color:#fff">01 00 00 00 00 00 01 00  21 00 10 00 00 00 00 00</div>
<div class="t mh" style="left:2240.23px;top:482.18px;color:#fff">········ !·······</div>
<div class="a" style="left:1691.9px;top:500.65px;width:516.6px;height:22.55px;background:#1e1e1e;"></div>
<div class="a" style="left:2239.95px;top:500.65px;width:183.25px;height:22.55px;background:#1e1e1e;"></div>
<div class="t mh" style="left:1629.61px;top:504.71px;color:#808080">0050</div>
<div class="t mh" style="left:1693.50px;top:504.71px;color:#fff">00 00 03 00 00 00 00 00  00 00 ff fe 00 00 00 00</div>
<div class="t mh" style="left:2240.23px;top:504.71px;color:#fff">········ ········</div>
<div class="a" style="left:1691.9px;top:523.18px;width:516.6px;height:22.55px;background:#1e1e1e;"></div>
<div class="a" style="left:2239.95px;top:523.18px;width:183.25px;height:22.55px;background:#1e1e1e;"></div>
<div class="t mh" style="left:1629.61px;top:527.24px;color:#808080">0060</div>
<div class="t mh" style="left:1693.50px;top:527.24px;color:#fff">00 00 57 4a 5b 63 00 00  00 00 00 00 00 00 00 00</div>
<div class="t mh" style="left:2240.23px;top:527.24px;color:#fff">··WJ[c·· ········</div>
<div class="a" style="left:1691.9px;top:545.71px;width:516.6px;height:22.55px;background:#1e1e1e;"></div>
<div class="a" style="left:2239.95px;top:545.71px;width:183.25px;height:22.55px;background:#1e1e1e;"></div>
<div class="t mh" style="left:1629.61px;top:549.77px;color:#808080">0070</div>
<div class="t mh" style="left:1693.50px;top:549.77px;color:#fff">00 00 00 00 00 00 00 00  00 00 19 00 00 01 01 00</div>
<div class="t mh" style="left:2240.23px;top:549.77px;color:#fff">········ ········</div>
<div class="a" style="left:1691.9px;top:568.24px;width:516.6px;height:22.55px;background:#1e1e1e;"></div>
<div class="a" style="left:2239.95px;top:568.24px;width:183.25px;height:22.55px;background:#1e1e1e;"></div>
<div class="t mh" style="left:1629.61px;top:572.30px;color:#808080">0080</div>
<div class="t mh" style="left:1693.50px;top:572.30px;color:#fff">00 00 00 00 00 00 58 00  b3 01 00 00 00 00 00 00</div>
<div class="t mh" style="left:2240.23px;top:572.30px;color:#fff">······X· ········</div>
<div class="a" style="left:1691.9px;top:590.77px;width:516.6px;height:22.55px;background:#1e1e1e;"></div>
<div class="a" style="left:2239.95px;top:590.77px;width:183.25px;height:22.55px;background:#1e1e1e;"></div>
<div class="t mh" style="left:1629.61px;top:594.83px;color:#808080">0090</div>
<div class="t mh" style="left:1693.50px;top:594.83px;color:#fff">00 00 a1 82 01 af 30 82  01 ab a0 03 0a 01 01 a2</div>
<div class="t mh" style="left:2240.23px;top:594.83px;color:#fff">······0· ········</div>
<div class="a" style="left:1691.9px;top:613.3px;width:516.6px;height:22.55px;background:#1e1e1e;"></div>
<div class="a" style="left:2239.95px;top:613.3px;width:183.25px;height:22.55px;background:#1e1e1e;"></div>
<div class="a" style="left:1917.65px;top:613.3px;width:290.85px;height:22.55px;background:#0078d7;"></div>
<div class="a" style="left:2315.2px;top:613.3px;width:108.0px;height:22.55px;background:#0078d7;"></div>
<div class="t mh" style="left:1629.61px;top:617.36px;color:#bababa">00a0</div>
<div class="t mh" style="left:1693.50px;top:617.36px;color:#fff">82 01 8e 04 82 01 8a 4e  54 4c 4d 53 53 50 00 03</div>
<div class="t mh" style="left:2240.23px;top:617.36px;color:#fff">·······N TLMSSP··</div>
<div class="a" style="left:1691.9px;top:635.83px;width:516.6px;height:22.55px;background:#1e1e1e;"></div>
<div class="a" style="left:2239.95px;top:635.83px;width:183.25px;height:22.55px;background:#1e1e1e;"></div>
<div class="a" style="left:1691.9px;top:635.83px;width:516.6px;height:22.55px;background:#0078d7;"></div>
<div class="a" style="left:2239.95px;top:635.83px;width:183.25px;height:22.55px;background:#0078d7;"></div>
<div class="t mh" style="left:1629.61px;top:639.89px;color:#bababa">00b0</div>
<div class="t mh" style="left:1693.50px;top:639.89px;color:#fff">00 00 00 18 00 18 00 80  00 00 00 e2 00 e2 00 98</div>
<div class="t mh" style="left:2240.23px;top:639.89px;color:#fff">········ ········</div>
<div class="a" style="left:1691.9px;top:658.36px;width:516.6px;height:22.55px;background:#1e1e1e;"></div>
<div class="a" style="left:2239.95px;top:658.36px;width:183.25px;height:22.55px;background:#1e1e1e;"></div>
<div class="a" style="left:1691.9px;top:658.36px;width:516.6px;height:22.55px;background:#0078d7;"></div>
<div class="a" style="left:2239.95px;top:658.36px;width:183.25px;height:22.55px;background:#0078d7;"></div>
<div class="t mh" style="left:1629.61px;top:662.42px;color:#bababa">00c0</div>
<div class="t mh" style="left:1693.50px;top:662.42px;color:#fff">00 00 00 02 00 02 00 58  00 00 00 08 00 08 00 5a</div>
<div class="t mh" style="left:2240.23px;top:662.42px;color:#fff">·······X ·······Z</div>
<div class="a" style="left:1691.9px;top:680.89px;width:516.6px;height:22.55px;background:#1e1e1e;"></div>
<div class="a" style="left:2239.95px;top:680.89px;width:183.25px;height:22.55px;background:#1e1e1e;"></div>
<div class="a" style="left:1691.9px;top:680.89px;width:516.6px;height:22.55px;background:#0078d7;"></div>
<div class="a" style="left:2239.95px;top:680.89px;width:183.25px;height:22.55px;background:#0078d7;"></div>
<div class="t mh" style="left:1629.61px;top:684.95px;color:#bababa">00d0</div>
<div class="t mh" style="left:1693.50px;top:684.95px;color:#fff">00 00 00 1e 00 1e 00 62  00 00 00 10 00 10 00 7a</div>
<div class="t mh" style="left:2240.23px;top:684.95px;color:#fff">·······b ·······z</div>
<div class="a" style="left:1691.9px;top:703.42px;width:516.6px;height:22.55px;background:#1e1e1e;"></div>
<div class="a" style="left:2239.95px;top:703.42px;width:183.25px;height:22.55px;background:#1e1e1e;"></div>
<div class="a" style="left:1691.9px;top:703.42px;width:516.6px;height:22.55px;background:#0078d7;"></div>
<div class="a" style="left:2239.95px;top:703.42px;width:183.25px;height:22.55px;background:#0078d7;"></div>
<div class="t mh" style="left:1629.61px;top:707.48px;color:#bababa">00e0</div>
<div class="t mh" style="left:1693.50px;top:707.48px;color:#fff">01 00 00 15 82 88 e2 0a  00 f0 55 00 00 00 0f 0f</div>
<div class="t mh" style="left:2240.23px;top:707.48px;color:#fff">········ ··U·····</div>
<div class="a" style="left:1691.9px;top:725.95px;width:516.6px;height:22.55px;background:#1e1e1e;"></div>
<div class="a" style="left:2239.95px;top:725.95px;width:183.25px;height:22.55px;background:#1e1e1e;"></div>
<div class="a" style="left:1691.9px;top:725.95px;width:516.6px;height:22.55px;background:#0078d7;"></div>
<div class="a" style="left:2239.95px;top:725.95px;width:183.25px;height:22.55px;background:#0078d7;"></div>
<div class="t mh" style="left:1629.61px;top:730.01px;color:#bababa">00f0</div>
<div class="t mh" style="left:1693.50px;top:730.01px;color:#fff">f5 f7 a9 1e 3a 02 6e f9  c7 8a 41 30 d6 ee 40 2e</div>
<div class="t mh" style="left:2240.23px;top:730.01px;color:#fff">····:·n· ··A0··@.</div>
<div class="a" style="left:1691.9px;top:748.48px;width:516.6px;height:22.55px;background:#1e1e1e;"></div>
<div class="a" style="left:2239.95px;top:748.48px;width:183.25px;height:22.55px;background:#1e1e1e;"></div>
<div class="a" style="left:1691.9px;top:748.48px;width:516.6px;height:22.55px;background:#0078d7;"></div>
<div class="a" style="left:2239.95px;top:748.48px;width:183.25px;height:22.55px;background:#0078d7;"></div>
<div class="t mh" style="left:1629.61px;top:752.54px;color:#bababa">0100</div>
<div class="t mh" style="left:1693.50px;top:752.54px;color:#fff">00 72 00 6f 00 6f 00 74  00 44 00 45 00 53 00 4b</div>
<div class="t mh" style="left:2240.23px;top:752.54px;color:#fff">·r·o·o·t ·D·E·S·K</div>
<div class="a" style="left:1691.9px;top:771.01px;width:516.6px;height:22.55px;background:#1e1e1e;"></div>
<div class="a" style="left:2239.95px;top:771.01px;width:183.25px;height:22.55px;background:#1e1e1e;"></div>
<div class="a" style="left:1691.9px;top:771.01px;width:516.6px;height:22.55px;background:#0078d7;"></div>
<div class="a" style="left:2239.95px;top:771.01px;width:183.25px;height:22.55px;background:#0078d7;"></div>
<div class="t mh" style="left:1629.61px;top:775.07px;color:#bababa">0110</div>
<div class="t mh" style="left:1693.50px;top:775.07px;color:#fff">00 54 00 4f 00 50 00 2d  00 42 00 49 00 34 00 38</div>
<div class="t mh" style="left:2240.23px;top:775.07px;color:#fff">·T·O·P·- ·B·I·4·8</div>
<div class="a" style="left:1691.9px;top:793.54px;width:516.6px;height:22.55px;background:#1e1e1e;"></div>
<div class="a" style="left:2239.95px;top:793.54px;width:183.25px;height:22.55px;background:#1e1e1e;"></div>
<div class="a" style="left:1691.9px;top:793.54px;width:516.6px;height:22.55px;background:#0078d7;"></div>
<div class="a" style="left:2239.95px;top:793.54px;width:183.25px;height:22.55px;background:#0078d7;"></div>
<div class="t mh" style="left:1629.61px;top:797.60px;color:#bababa">0120</div>
<div class="t mh" style="left:1693.50px;top:797.60px;color:#fff">00 32 00 4e 00 33 00 00  00 00 00 00 00 00 00 00</div>
<div class="t mh" style="left:2240.23px;top:797.60px;color:#fff">·2·N·3·· ········</div>
<div class="a" style="left:1691.9px;top:816.07px;width:516.6px;height:22.55px;background:#1e1e1e;"></div>
<div class="a" style="left:2239.95px;top:816.07px;width:183.25px;height:22.55px;background:#1e1e1e;"></div>
<div class="a" style="left:1691.9px;top:816.07px;width:516.6px;height:22.55px;background:#0078d7;"></div>
<div class="a" style="left:2239.95px;top:816.07px;width:183.25px;height:22.55px;background:#0078d7;"></div>
<div class="t mh" style="left:1629.61px;top:820.13px;color:#bababa">0130</div>
<div class="t mh" style="left:1693.50px;top:820.13px;color:#fff">00 00 00 00 00 00 00 00  00 00 00 00 00 00 00 e4</div>
<div class="t mh" style="left:2240.23px;top:820.13px;color:#fff">········ ········</div>
<div class="a" style="left:1691.9px;top:838.6px;width:516.6px;height:22.55px;background:#1e1e1e;"></div>
<div class="a" style="left:2239.95px;top:838.6px;width:183.25px;height:22.55px;background:#1e1e1e;"></div>
<div class="a" style="left:1691.9px;top:838.6px;width:516.6px;height:22.55px;background:#0078d7;"></div>
<div class="a" style="left:2239.95px;top:838.6px;width:183.25px;height:22.55px;background:#0078d7;"></div>
<div class="t mh" style="left:1629.61px;top:842.66px;color:#bababa">0140</div>
<div class="t mh" style="left:1693.50px;top:842.66px;color:#fff">3a e3 e4 91 ff e9 6b ca  53 83 b9 c0 bc 49 46 01</div>
<div class="t mh" style="left:2240.23px;top:842.66px;color:#fff">:·····k· S····IF·</div>
<div class="a" style="left:1691.9px;top:861.13px;width:516.6px;height:22.55px;background:#1e1e1e;"></div>
<div class="a" style="left:2239.95px;top:861.13px;width:183.25px;height:22.55px;background:#1e1e1e;"></div>
<div class="a" style="left:1691.9px;top:861.13px;width:516.6px;height:22.55px;background:#0078d7;"></div>
<div class="a" style="left:2239.95px;top:861.13px;width:183.25px;height:22.55px;background:#0078d7;"></div>
<div class="t mh" style="left:1629.61px;top:865.19px;color:#bababa">0150</div>
<div class="t mh" style="left:1693.50px;top:865.19px;color:#fff">01 00 00 00 00 00 00 b6  ca 87 35 6b 64 dc 01 ec</div>
<div class="t mh" style="left:2240.23px;top:865.19px;color:#fff">········ ··5kd···</div>
<div class="a" style="left:1691.9px;top:883.66px;width:516.6px;height:22.55px;background:#1e1e1e;"></div>
<div class="a" style="left:2239.95px;top:883.66px;width:183.25px;height:22.55px;background:#1e1e1e;"></div>
<div class="a" style="left:1691.9px;top:883.66px;width:516.6px;height:22.55px;background:#0078d7;"></div>
<div class="a" style="left:2239.95px;top:883.66px;width:183.25px;height:22.55px;background:#0078d7;"></div>
<div class="t mh" style="left:1629.61px;top:887.72px;color:#bababa">0160</div>
<div class="t mh" style="left:1693.50px;top:887.72px;color:#fff">a0 54 74 1f a4 79 e6 00  00 00 00 02 00 08 00 4b</div>
<div class="t mh" style="left:2240.23px;top:887.72px;color:#fff">·Tt··y·· ·······K</div>
<div class="a" style="left:1691.9px;top:906.19px;width:516.6px;height:22.55px;background:#1e1e1e;"></div>
<div class="a" style="left:2239.95px;top:906.19px;width:183.25px;height:22.55px;background:#1e1e1e;"></div>
<div class="a" style="left:1691.9px;top:906.19px;width:516.6px;height:22.55px;background:#0078d7;"></div>
<div class="a" style="left:2239.95px;top:906.19px;width:183.25px;height:22.55px;background:#0078d7;"></div>
<div class="t mh" style="left:1629.61px;top:910.25px;color:#bababa">0170</div>
<div class="t mh" style="left:1693.50px;top:910.25px;color:#fff">00 41 00 4c 00 49 00 01  00 08 00 4b 00 41 00 4c</div>
<div class="t mh" style="left:2240.23px;top:910.25px;color:#fff">·A·L·I·· ···K·A·L</div>
<div class="a" style="left:1691.9px;top:928.72px;width:516.6px;height:22.55px;background:#1e1e1e;"></div>
<div class="a" style="left:2239.95px;top:928.72px;width:183.25px;height:22.55px;background:#1e1e1e;"></div>
<div class="a" style="left:1691.9px;top:928.72px;width:516.6px;height:22.55px;background:#0078d7;"></div>
<div class="a" style="left:2239.95px;top:928.72px;width:183.25px;height:22.55px;background:#0078d7;"></div>
<div class="t mh" style="left:1629.61px;top:932.78px;color:#bababa">0180</div>
<div class="t mh" style="left:1693.50px;top:932.78px;color:#fff">00 49 00 04 00 00 00 03  00 08 00 6b 00 61 00 6c</div>
<div class="t mh" style="left:2240.23px;top:932.78px;color:#fff">·I······ ···k·a·l</div>
<div class="a" style="left:1691.9px;top:951.25px;width:516.6px;height:22.55px;background:#1e1e1e;"></div>
<div class="a" style="left:2239.95px;top:951.25px;width:183.25px;height:22.55px;background:#1e1e1e;"></div>
<div class="a" style="left:1691.9px;top:951.25px;width:516.6px;height:22.55px;background:#0078d7;"></div>
<div class="a" style="left:2239.95px;top:951.25px;width:183.25px;height:22.55px;background:#0078d7;"></div>
<div class="t mh" style="left:1629.61px;top:955.31px;color:#bababa">0190</div>
<div class="t mh" style="left:1693.50px;top:955.31px;color:#fff">00 69 00 07 00 08 00 b6  ca 87 35 6b 64 dc 01 06</div>
<div class="t mh" style="left:2240.23px;top:955.31px;color:#fff">·i······ ··5kd···</div>
<div class="a" style="left:1691.9px;top:973.78px;width:516.6px;height:22.55px;background:#1e1e1e;"></div>
<div class="a" style="left:2239.95px;top:973.78px;width:183.25px;height:22.55px;background:#1e1e1e;"></div>
<div class="a" style="left:1691.9px;top:973.78px;width:516.6px;height:22.55px;background:#0078d7;"></div>
<div class="a" style="left:2239.95px;top:973.78px;width:183.25px;height:22.55px;background:#0078d7;"></div>
<div class="t mh" style="left:1629.61px;top:977.84px;color:#bababa">01a0</div>
<div class="t mh" style="left:1693.50px;top:977.84px;color:#fff">00 04 00 02 00 00 00 08  00 30 00 30 00 00 00 00</div>
<div class="t mh" style="left:2240.23px;top:977.84px;color:#fff">········ ·0·0····</div>
<div class="a" style="left:1691.9px;top:996.31px;width:516.6px;height:22.55px;background:#1e1e1e;"></div>
<div class="a" style="left:2239.95px;top:996.31px;width:183.25px;height:22.55px;background:#1e1e1e;"></div>
<div class="a" style="left:1691.9px;top:996.31px;width:516.6px;height:22.55px;background:#0078d7;"></div>
<div class="a" style="left:2239.95px;top:996.31px;width:183.25px;height:22.55px;background:#0078d7;"></div>
<div class="t mh" style="left:1629.61px;top:1000.37px;color:#bababa">01b0</div>
<div class="t mh" style="left:1693.50px;top:1000.37px;color:#fff">00 00 00 01 00 00 00 00  20 00 00 e5 52 8e 00 f4</div>
<div class="t mh" style="left:2240.23px;top:1000.37px;color:#fff">········  ···R···</div>
<div class="a" style="left:1691.9px;top:1018.84px;width:516.6px;height:22.55px;background:#1e1e1e;"></div>
<div class="a" style="left:2239.95px;top:1018.84px;width:183.25px;height:22.55px;background:#1e1e1e;"></div>
<div class="a" style="left:1691.9px;top:1018.84px;width:516.6px;height:22.55px;background:#0078d7;"></div>
<div class="a" style="left:2239.95px;top:1018.84px;width:183.25px;height:22.55px;background:#0078d7;"></div>
<div class="t mh" style="left:1629.61px;top:1022.90px;color:#bababa">01c0</div>
<div class="t mh" style="left:1693.50px;top:1022.90px;color:#fff">d9 b3 bf 47 5a bb b1 d4  e9 0a c0 16 35 87 fc cd</div>
<div class="t mh" style="left:2240.23px;top:1022.90px;color:#fff">···GZ··· ····5···</div>
<div class="a" style="left:1691.9px;top:1041.37px;width:516.6px;height:22.55px;background:#1e1e1e;"></div>
<div class="a" style="left:2239.95px;top:1041.37px;width:183.25px;height:22.55px;background:#1e1e1e;"></div>
<div class="a" style="left:1691.9px;top:1041.37px;width:516.6px;height:22.55px;background:#0078d7;"></div>
<div class="a" style="left:2239.95px;top:1041.37px;width:183.25px;height:22.55px;background:#0078d7;"></div>
<div class="t mh" style="left:1629.61px;top:1045.43px;color:#bababa">01d0</div>
<div class="t mh" style="left:1693.50px;top:1045.43px;color:#fff">7d 2e 8a af db 9b 45 53  27 e4 8d 0a 00 10 00 00</div>
<div class="t mh" style="left:2240.23px;top:1045.43px;color:#fff">}.····ES '·······</div>
<div class="a" style="left:1691.9px;top:1063.9px;width:516.6px;height:22.55px;background:#1e1e1e;"></div>
<div class="a" style="left:2239.95px;top:1063.9px;width:183.25px;height:22.55px;background:#1e1e1e;"></div>
<div class="a" style="left:1691.9px;top:1063.9px;width:516.6px;height:22.55px;background:#0078d7;"></div>
<div class="a" style="left:2239.95px;top:1063.9px;width:183.25px;height:22.55px;background:#0078d7;"></div>
<div class="t mh" style="left:1629.61px;top:1067.96px;color:#bababa">01e0</div>
<div class="t mh" style="left:1693.50px;top:1067.96px;color:#fff">00 00 00 00 00 00 00 00  00 00 00 00 00 00 00 09</div>
<div class="t mh" style="left:2240.23px;top:1067.96px;color:#fff">········ ········</div>
<div class="a" style="left:1691.9px;top:1086.43px;width:516.6px;height:22.55px;background:#1e1e1e;"></div>
<div class="a" style="left:2239.95px;top:1086.43px;width:183.25px;height:22.55px;background:#1e1e1e;"></div>
<div class="a" style="left:1691.9px;top:1086.43px;width:516.6px;height:22.55px;background:#0078d7;"></div>
<div class="a" style="left:2239.95px;top:1086.43px;width:183.25px;height:22.55px;background:#0078d7;"></div>
<div class="t mh" style="left:1629.61px;top:1090.49px;color:#bababa">01f0</div>
<div class="t mh" style="left:1693.50px;top:1090.49px;color:#fff">00 26 00 63 00 69 00 66  00 73 00 2f 00 31 00 39</div>
<div class="t mh" style="left:2240.23px;top:1090.49px;color:#fff">·&amp;·c·i·f ·s·/·1·9</div>
<div class="a" style="left:1691.9px;top:1108.96px;width:516.6px;height:22.55px;background:#1e1e1e;"></div>
<div class="a" style="left:2239.95px;top:1108.96px;width:183.25px;height:22.55px;background:#1e1e1e;"></div>
<div class="a" style="left:1691.9px;top:1108.96px;width:516.6px;height:22.55px;background:#0078d7;"></div>
<div class="a" style="left:2239.95px;top:1108.96px;width:183.25px;height:22.55px;background:#0078d7;"></div>
<div class="t mh" style="left:1629.61px;top:1113.02px;color:#bababa">0200</div>
<div class="t mh" style="left:1693.50px;top:1113.02px;color:#fff">00 32 00 2e 00 31 00 36  00 38 00 2e 00 35 00 30</div>
<div class="t mh" style="left:2240.23px;top:1113.02px;color:#fff">·2·.·1·6 ·8·.·5·0</div>
<div class="a" style="left:1691.9px;top:1131.49px;width:516.6px;height:22.55px;background:#1e1e1e;"></div>
<div class="a" style="left:2239.95px;top:1131.49px;width:183.25px;height:22.55px;background:#1e1e1e;"></div>
<div class="a" style="left:1691.9px;top:1131.49px;width:516.6px;height:22.55px;background:#0078d7;"></div>
<div class="a" style="left:2239.95px;top:1131.49px;width:183.25px;height:22.55px;background:#0078d7;"></div>
<div class="t mh" style="left:1629.61px;top:1135.55px;color:#bababa">0210</div>
<div class="t mh" style="left:1693.50px;top:1135.55px;color:#fff">00 2e 00 31 00 32 00 38  00 00 00 00 00 00 00 00</div>
<div class="t mh" style="left:2240.23px;top:1135.55px;color:#fff">·.·1·2·8 ········</div>
<div class="a" style="left:1691.9px;top:1154.02px;width:516.6px;height:22.55px;background:#1e1e1e;"></div>
<div class="a" style="left:2239.95px;top:1154.02px;width:183.25px;height:22.55px;background:#1e1e1e;"></div>
<div class="a" style="left:1691.9px;top:1154.02px;width:516.6px;height:22.55px;background:#0078d7;"></div>
<div class="a" style="left:2239.95px;top:1154.02px;width:183.25px;height:22.55px;background:#0078d7;"></div>
<div class="t mh" style="left:1629.61px;top:1158.08px;color:#bababa">0220</div>
<div class="t mh" style="left:1693.50px;top:1158.08px;color:#fff">00 20 5f 54 e6 e2 af 18  52 ea b0 d7 21 83 df 59</div>
<div class="t mh" style="left:2240.23px;top:1158.08px;color:#fff">· _T···· R···!··Y</div>
<div class="a" style="left:1691.9px;top:1176.55px;width:516.6px;height:22.55px;background:#1e1e1e;"></div>
<div class="a" style="left:2239.95px;top:1176.55px;width:183.25px;height:22.55px;background:#1e1e1e;"></div>
<div class="a" style="left:1691.9px;top:1176.55px;width:23.4px;height:22.55px;background:#0078d7;"></div>
<div class="a" style="left:2239.95px;top:1176.55px;width:11.25px;height:22.55px;background:#0078d7;"></div>
<div class="t mh" style="left:1629.61px;top:1180.61px;color:#bababa">0230</div>
<div class="t mh" style="left:1693.50px;top:1180.61px;color:#fff">38 a3 12 04 10 01 00 00  00 c2 57 68 18 51 9b b5</div>
<div class="t mh" style="left:2240.23px;top:1180.61px;color:#fff">8······· ··Wh·Q··</div>
<div class="a" style="left:1691.9px;top:1199.08px;width:152.4px;height:22.55px;background:#1e1e1e;"></div>
<div class="a" style="left:2239.95px;top:1199.08px;width:54.25px;height:22.55px;background:#1e1e1e;"></div>
<div class="t mh" style="left:1629.61px;top:1203.14px;color:#808080">0240</div>
<div class="t mh" style="left:1693.50px;top:1203.14px;color:#fff">57 00 00 00 00</div>
<div class="t mh" style="left:2240.23px;top:1203.14px;color:#fff">W····</div>
<svg class="a" style="left:1271px;top:381.5px" width="26" height="4" viewBox="0 0 26 4"><rect x="0.4" y="0.5" width="2.6" height="2.6" fill="#7c7c7c"/><rect x="4.6000000000000005" y="0.5" width="2.6" height="2.6" fill="#7c7c7c"/><rect x="8.8" y="0.5" width="2.6" height="2.6" fill="#7c7c7c"/><rect x="13.000000000000002" y="0.5" width="2.6" height="2.6" fill="#7c7c7c"/><rect x="17.2" y="0.5" width="2.6" height="2.6" fill="#7c7c7c"/><rect x="21.4" y="0.5" width="2.6" height="2.6" fill="#7c7c7c"/></svg>
<svg class="a" style="left:1613.4px;top:850px" width="4" height="26" viewBox="0 0 4 26"><rect y="0.4" x="0.5" width="2.8" height="2.8" fill="#808080"/><rect y="4.6000000000000005" x="0.5" width="2.8" height="2.8" fill="#808080"/><rect y="8.8" x="0.5" width="2.8" height="2.8" fill="#808080"/><rect y="13.000000000000002" x="0.5" width="2.8" height="2.8" fill="#808080"/><rect y="17.2" x="0.5" width="2.8" height="2.8" fill="#808080"/><rect y="21.4" x="0.5" width="2.8" height="2.8" fill="#808080"/></svg>
<div class="a" style="left:0px;top:1334px;width:2560px;height:34px;background:#1e1e1e;"></div>
<svg class="a" style="left:0;top:1334px" width="90" height="34" viewBox="0 1334 90 34"><defs><radialGradient id="gball" cx="0.38" cy="0.3" r="0.8"><stop offset="0" stop-color="#adc8ea"/><stop offset="1" stop-color="#74a2da"/></radialGradient></defs><circle cx="25.4" cy="1351.1" r="10.2" fill="url(#gball)"/><rect x="50.6" y="1341.2" width="15.4" height="20.6" fill="#ececea" stroke="#9a9a96" stroke-width="0.6"/><rect x="50.9" y="1341.5" width="14.8" height="4.6" fill="#2ba4ea"/><path d="M54.6 1346.2c0.6-2 1.6-3 2.4-3.6c-0.2 1.4 0.2 2.6 1.2 3.6z" fill="#f4f6f8"/><rect x="50.9" y="1360" width="14.8" height="1.6" fill="#c9c9c4"/><path d="M53.5 1350h9M53.5 1353.8h5M53.5 1357.4h10" stroke="#cfcfcc" stroke-width="1"/><path d="M69.2 1340.6l1.9 1.5-12.2 13.2-3.2 1.2 1-3.2z" fill="#4c4c4c" stroke="#6a6a6a" stroke-width="0.5"/><path d="M55.5 1356.6l1-3 2.2 1.8z" fill="#1a1a1a"/></svg>
<svg class="a" style="left:95px;top:1358.8px" width="1" height="1"><text x="0" y="0" font-family="Liberation Sans" font-size="19.6" fill="#fff" textLength="448.50" lengthAdjust="spacing" style="white-space:pre;">NTLM Secure Service Provider (ntlmssp), 394 byte(s)</text></svg>
<div class="a" style="left:1811.5px;top:1340px;width:1px;height:24px;background:#303030;"></div>
<div class="a" style="left:1816.5px;top:1340px;width:1px;height:24px;background:#2a2a2a;"></div>
<div class="a" style="left:2413.5px;top:1340px;width:1px;height:24px;background:#303030;"></div>
<div class="a" style="left:2418.5px;top:1340px;width:1px;height:24px;background:#2a2a2a;"></div>
<svg class="a" style="left:1834.5px;top:1358.0px" width="1" height="1"><text x="0" y="0" font-family="'Liberation Sans','Noto Sans CJK SC',sans-serif" font-size="19" fill="#fff" textLength="38" lengthAdjust="spacing">分组</text></svg>
<svg class="a" style="left:1873.0px;top:1358.6px" width="1" height="1"><text x="0" y="0" font-family="Liberation Sans" font-size="19.2" fill="#fff" textLength="67.50" lengthAdjust="spacing" style="white-space:pre;">: 1250 · </text></svg>
<svg class="a" style="left:1938.0px;top:1358.0px" width="1" height="1"><text x="0" y="0" font-family="'Liberation Sans','Noto Sans CJK SC',sans-serif" font-size="19" fill="#fff" textLength="57" lengthAdjust="spacing">已显示</text></svg>
<svg class="a" style="left:1995.5px;top:1358.6px" width="1" height="1"><text x="0" y="0" font-family="Liberation Sans" font-size="19.2" fill="#fff" textLength="106.00" lengthAdjust="spacing" style="white-space:pre;">: 183 (14.6%)</text></svg>
<svg class="a" style="left:2437.5px;top:1358.0px" width="1" height="1"><text x="0" y="0" font-family="'Liberation Sans','Noto Sans CJK SC',sans-serif" font-size="19" fill="#fff" textLength="38" lengthAdjust="spacing">配置</text></svg>
<svg class="a" style="left:2477.0px;top:1358.6px" width="1" height="1"><text x="0" y="0" font-family="Liberation Sans" font-size="19.2" fill="#fff" style="white-space:pre;">:</text></svg>
<svg class="a" style="left:2490.5px;top:1358.6px" width="1" height="1"><text x="0" y="0" font-family="Liberation Sans" font-size="19.2" fill="#fff" textLength="63.50" lengthAdjust="spacing" style="white-space:pre;">Default</text></svg>
<svg class="a" style="left:0;top:0" width="2560" height="1368" viewBox="0 0 2560 1368"><g stroke="#ed1c24" fill="none" stroke-width="2.6"><rect x="271.8" y="653.8" width="170.4" height="22"/><rect x="294.8" y="677.8" width="122.4" height="22.6"/><rect x="239.3" y="1105.8" width="129.4" height="26.2"/><rect x="237.8" y="1134.3" width="116.4" height="24.5"/></g><g stroke="#ed1c24" stroke-width="6.6" stroke-linecap="round" fill="none"><path d="M1217.5 526.5L150 154.5"/><path d="M1258.5 515.2L1516 297"/></g><g fill="#ed1c24"><path d="M127.5 146.5L157.5 143.2L149 166z"/><path d="M1538 279.5L1506.5 287L1524.5 306z"/></g></svg>
</body></html>
